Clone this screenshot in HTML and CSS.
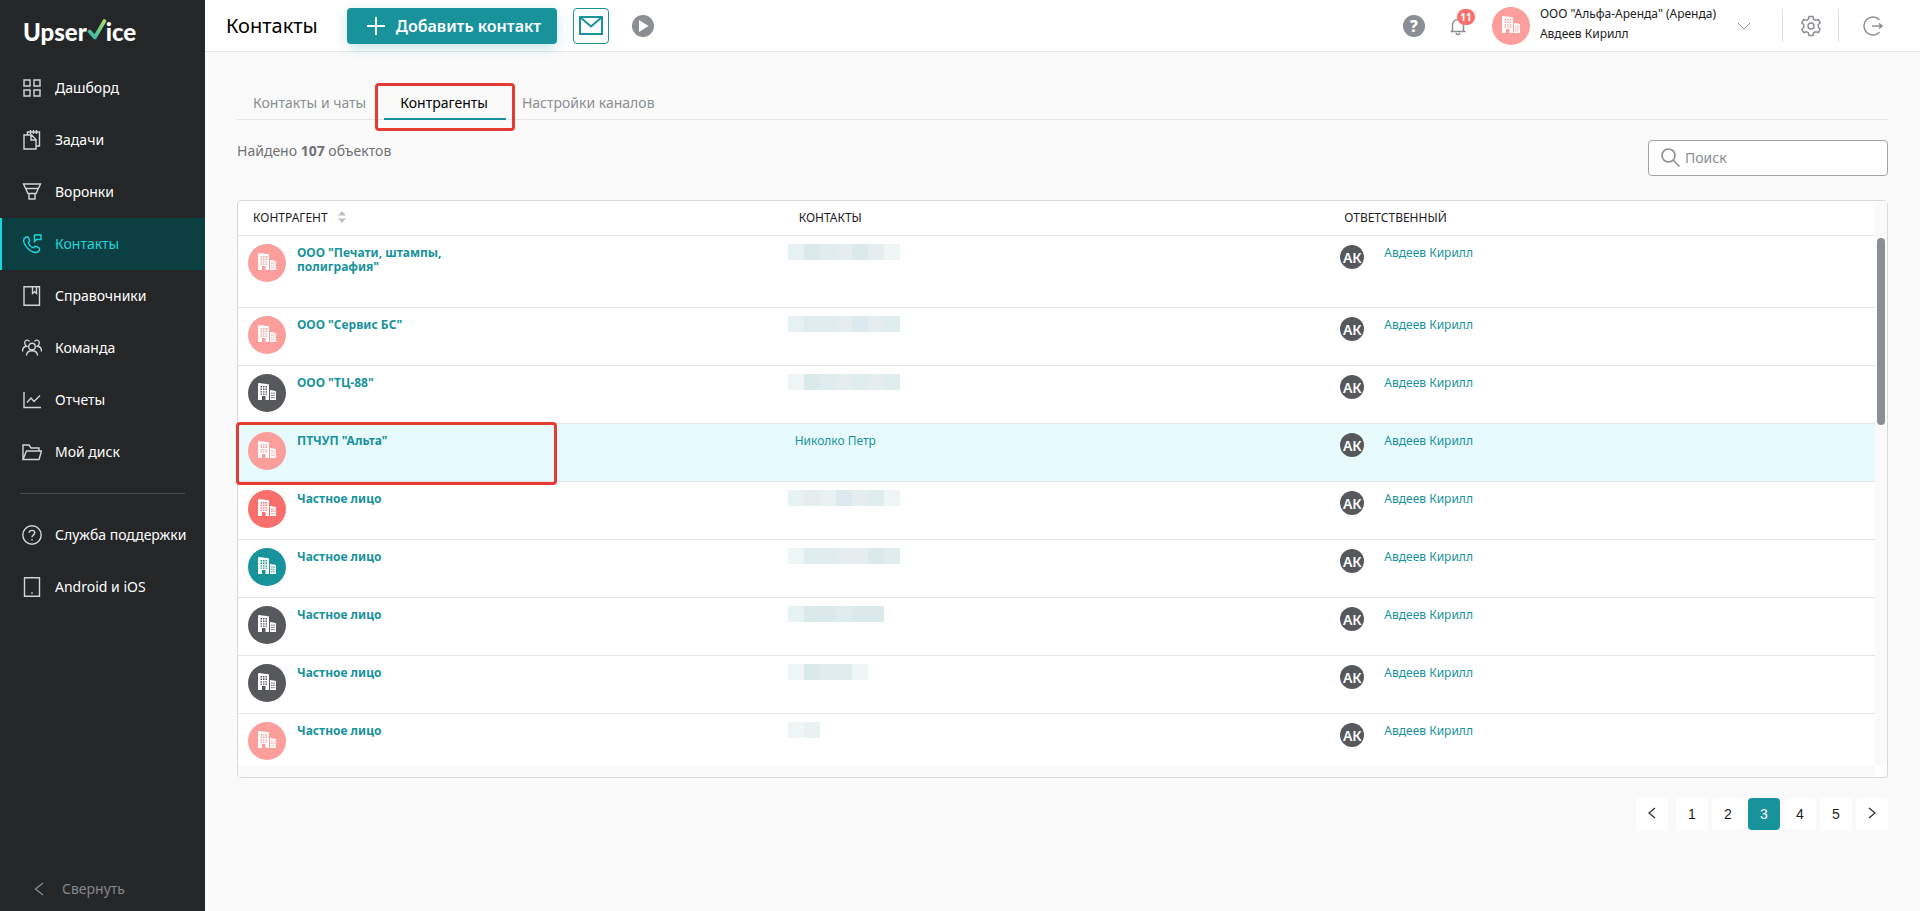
FILE: index.html
```
<!DOCTYPE html>
<html lang="ru">
<head>
  <meta charset="UTF-8">
  <meta name="viewport" content="width=device-width, initial-scale=1.0">
  <title>Upservice - Контрагенты</title>
  <link rel="stylesheet" href="styles.css">
</head>
<body>
  <!-- Иконки -->
  <svg class="sprite" xmlns="http://www.w3.org/2000/svg">
    <symbol id="building" viewBox="0 0 18 18">
      <path fill="currentColor" fill-rule="evenodd" d="M0 .5L1 0l9.500 1.200.5.600V17H7.500v-4H4v4H0zM12 7l5 .8 1 .8V17h-6zM2.500 3v1.400h1.500V3zM5 3v1.400h1.500V3zM7.500 3v1.400H9V3zM2.500 5.600V7H4V5.600zM5 5.600V7h1.500V5.600zM7.500 5.600V7H9V5.600zM2.500 8.200v1.400H4V8.200zM5 8.200v1.400h1.500V8.200zM7.500 8.200v1.400H9V8.200zM2.500 10.600v1.200H4v-1.200zM5 10.600v1.200h1.500v-1.200zM7.500 10.600v1.200H9v-1.200zM13.300 9.500v1.200h1.200V9.500zM15.400 9.500v1.200h1.200V9.500zM13.300 11.800V13h1.200v-1.200zM15.400 11.800V13h1.200v-1.200zM13.300 14v1.200h1.200V14zM15.400 14v1.200h1.200V14z"/>
    </symbol>
  </svg>

  <div class="layout">
    <aside class="sidebar">
      <a href="#" class="logo">Upser<svg width="20" height="21" viewBox="0 0 18 20"><defs><linearGradient id="check" x1="0" y1="1" x2="1" y2="0"><stop offset="0" stop-color="#2fb5b0"/><stop offset="1" stop-color="#a5dd62"/></linearGradient></defs><path d="M2 12l5 5.500L16 2" fill="none" stroke="url(#check)" stroke-width="3.600" stroke-linecap="round" stroke-linejoin="round"/></svg>ice</a>

      <nav class="menu">
        <a href="#"><svg viewBox="0 0 20 20"><path d="M2 2h6v6H2zM12 2h6v6h-6zM2 12h6v6H2zM12 12h6v6h-6z"/></svg>Дашборд</a>
        <a href="#"><svg viewBox="0 0 20 20"><path d="M2 5h7.500l4.500 4.500V19H2zM9 5v5h5M5.500 4.500V2H17.500v14H14M8.500 0v4M11.500 0v4M14.500 0v4"/></svg>Задачи</a>
        <a href="#"><svg viewBox="0 0 20 20"><path d="M1.500 2h17L14 11.500H6zM4 6.500h12M7 11.500V17h6v-5.500"/></svg>Воронки</a>
        <a href="#" class="active"><svg viewBox="0 0 20 20"><path d="M4.500 3C2 4 1 6 2.200 9c1.600 4 5 7.600 9 9 3 1 5.300.2 6.300-2.300.3-.8 0-1.400-.6-1.800l-2.600-1.500c-.8-.4-1.400-.2-1.900.4l-.8 1c-2.300-.6-4.700-3-5.400-5.400l1-.9c.6-.5.7-1.200.3-1.900L6.200 3.300C5.800 2.800 5.200 2.700 4.500 3zM12.500 1h6.500v4.500h-4.500L12.500 7.500z"/></svg>Контакты</a>
        <a href="#"><svg viewBox="0 0 20 20"><path d="M2 .8h15.500v18.400H2zM10.500 1v6.500l2-1.800 2 1.800V1"/></svg>Справочники</a>
        <a href="#"><svg viewBox="0 0 20 20"><circle cx="10" cy="8.500" r="3.300"/><path d="M4.500 17.500c.2-3 2-4.800 5.500-4.800s5.300 1.800 5.500 4.800M7.500 3.500C6.500 1.500 3 1.500 2.700 4.500c-.1 2 .8 3.200 2 3.800C2 8.500.5 10.500.5 13.500M12.500 3.500c1-2 4.500-2 4.800 1 .1 2-.8 3.200-2 3.800 2.700.2 4.200 2.200 4.200 5.200"/></svg>Команда</a>
        <a href="#"><svg viewBox="0 0 20 20"><path d="M2 2v15.500h17M5 12.500l4-4.500 3 3.500L18 5.500"/></svg>Отчеты</a>
        <a href="#"><svg viewBox="0 0 20 20"><path d="M1 17.500V3h6l2 3h8v3M1 17.500L4.500 9h15L17 17.500z"/></svg>Мой диск</a>
      </nav>
      <hr>
      <nav class="menu">
        <a href="#"><svg viewBox="0 0 20 20"><circle cx="10" cy="10" r="9.200"/><path d="M7.200 7.800C7.300 4.500 12.800 4.600 12.800 7.800c0 2-2.800 2.200-2.800 4.400M10 14v1.500"/></svg>Служба поддержки</a>
        <a href="#"><svg viewBox="0 0 20 20"><path d="M2.500 .8h15v18.400h-15zM9.300 16h1.400"/></svg>Android и iOS</a>
      </nav>
      <button type="button" class="collapse"><svg width="10" height="14" viewBox="0 0 10 14"><path d="M9 1L1.500 7 9 13"/></svg>Свернуть</button>
    </aside>

    <div class="page">
      <header class="topbar">
        <h1>Контакты</h1>
        <button type="button" class="btn-add"><svg width="20" height="20" viewBox="0 0 20 20"><path d="M10 1v18M1 10h18"/></svg>Добавить контакт</button>
        <button type="button" class="btn-mail" aria-label="Почта"><svg width="24" height="20" viewBox="0 0 24 20"><path d="M1 1h22v17H1zM1 1l11 9.500L23 1"/></svg></button>
        <button type="button" class="icon-btn" aria-label="Видео"><svg width="22" height="22" viewBox="0 0 22 22"><circle cx="11" cy="11" r="11" fill="#8b8e93"/><path d="M7 5l9.500 6L7 17z" fill="#fff"/></svg></button>

        <div class="tools">
          <button type="button" class="icon-btn help" aria-label="Помощь">?</button>
          <button type="button" class="icon-btn bell" aria-label="Уведомления"><svg width="18" height="20" viewBox="0 0 18 20"><path d="M1.500 15.500h15M3.500 15.500V9c0-7.500 11-7.500 11 0v6.500M7 17c.5 2 3.500 2 4 0" fill="none" stroke="#8b8e93" stroke-width="1.500"/></svg><span class="badge">11</span></button>
          <button type="button" class="account">
            <span class="avatar pink"><svg><use href="#building"/></svg></span>
            <span class="account-text"><span>ООО "Альфа-Аренда" (Аренда)</span><span>Авдеев Кирилл</span></span>
            <svg width="14" height="8" viewBox="0 0 14 8"><path d="M1 1l6 6 6-6"/></svg>
          </button>
          <button type="button" class="icon-btn cell" aria-label="Настройки"><svg width="20" height="22" viewBox="0 0 20 22"><path d="M8 1.500h4l.6 2.700 2 1.100L17.300 4.500l1.900 3.300-2 2v2.400l2 2-1.900 3.300-2.700-.8-2 1.100-.6 2.700H8l-.6-2.700-2-1.100-2.700.8L.8 14.200l2-2V9.800l-2-2 1.900-3.300 2.700.8 2-1.100z"/><circle cx="10" cy="11" r="3"/></svg></button>
          <button type="button" class="icon-btn cell" aria-label="Выйти"><svg width="20" height="20" viewBox="0 0 20 20"><path d="M16.500 3.800A9 9 0 1 0 16.500 16.200M9 10h10M16 7.500l3 2.500-3 2.500"/></svg></button>
        </div>
      </header>

      <main>
        <nav class="tabs">
          <a href="#">Контакты и чаты</a>
          <a href="#" class="active">Контрагенты<span class="mark"></span></a>
          <a href="#">Настройки каналов</a>
        </nav>

        <div class="toolbar">
          <p>Найдено <b>107</b> объектов</p>
          <label class="search">
            <svg width="20" height="20" viewBox="0 0 20 20"><circle cx="7.500" cy="7.500" r="6.500"/><path d="M12.300 12.300L18.500 18.500"/></svg>
            <input type="text" placeholder="Поиск" aria-label="Поиск">
          </label>
        </div>

        <div class="table-box">
          <table>
            <thead>
              <tr>
                <th>КОНТРАГЕНТ<svg class="sort" width="8" height="12" viewBox="0 0 8 12"><path d="M4 0l4 4.500H0zM4 12L0 7.500h8z"/></svg></th>
                <th>КОНТАКТЫ</th>
                <th>ОТВЕТСТВЕННЫЙ</th>
              </tr>
            </thead>
            <tbody>
              <tr>
                <td><div class="company"><span class="avatar pink"><svg><use href="#building"/></svg></span><a href="#">ООО "Печати, штампы, полиграфия"</a></div></td>
                <td><div class="tiles"><i class="c2"></i><i class="c4"></i><i class="c3"></i><i class="c5"></i><i class="c4"></i><i class="c5"></i><i class="c1"></i></div></td>
                <td><div class="person"><span>АК</span><a href="#">Авдеев Кирилл</a></div></td>
              </tr>
              <tr>
                <td><div class="company"><span class="avatar pink"><svg><use href="#building"/></svg></span><a href="#">ООО "Сервис БС"</a></div></td>
                <td><div class="tiles"><i class="c2"></i><i class="c3"></i><i class="c3"></i><i class="c5"></i><i class="c6"></i><i class="c5"></i><i class="c3"></i></div></td>
                <td><div class="person"><span>АК</span><a href="#">Авдеев Кирилл</a></div></td>
              </tr>
              <tr>
                <td><div class="company"><span class="avatar dark"><svg><use href="#building"/></svg></span><a href="#">ООО "ТЦ-88"</a></div></td>
                <td><div class="tiles"><i class="c1"></i><i class="c4"></i><i class="c3"></i><i class="c5"></i><i class="c3"></i><i class="c5"></i><i class="c3"></i></div></td>
                <td><div class="person"><span>АК</span><a href="#">Авдеев Кирилл</a></div></td>
              </tr>
              <tr class="selected">
                <td><div class="company"><span class="avatar pink"><svg><use href="#building"/></svg></span><a href="#">ПТЧУП "Альта"</a></div><span class="mark"></span></td>
                <td><a href="#" class="contact">Николко Петр</a></td>
                <td><div class="person"><span>АК</span><a href="#">Авдеев Кирилл</a></div></td>
              </tr>
              <tr>
                <td><div class="company"><span class="avatar red"><svg><use href="#building"/></svg></span><a href="#">Частное лицо</a></div></td>
                <td><div class="tiles"><i class="c2"></i><i class="c5"></i><i class="c2"></i><i class="c6"></i><i class="c5"></i><i class="c3"></i><i class="c1"></i></div></td>
                <td><div class="person"><span>АК</span><a href="#">Авдеев Кирилл</a></div></td>
              </tr>
              <tr>
                <td><div class="company"><span class="avatar teal"><svg><use href="#building"/></svg></span><a href="#">Частное лицо</a></div></td>
                <td><div class="tiles"><i class="c1"></i><i class="c3"></i><i class="c3"></i><i class="c5"></i><i class="c5"></i><i class="c4"></i><i class="c3"></i></div></td>
                <td><div class="person"><span>АК</span><a href="#">Авдеев Кирилл</a></div></td>
              </tr>
              <tr>
                <td><div class="company"><span class="avatar dark"><svg><use href="#building"/></svg></span><a href="#">Частное лицо</a></div></td>
                <td><div class="tiles"><i class="c2"></i><i class="c4"></i><i class="c4"></i><i class="c3"></i><i class="c4"></i><i class="c4"></i></div></td>
                <td><div class="person"><span>АК</span><a href="#">Авдеев Кирилл</a></div></td>
              </tr>
              <tr>
                <td><div class="company"><span class="avatar dark"><svg><use href="#building"/></svg></span><a href="#">Частное лицо</a></div></td>
                <td><div class="tiles"><i class="c1"></i><i class="c4"></i><i class="c3"></i><i class="c3"></i><i class="c1"></i></div></td>
                <td><div class="person"><span>АК</span><a href="#">Авдеев Кирилл</a></div></td>
              </tr>
              <tr>
                <td><div class="company"><span class="avatar pink"><svg><use href="#building"/></svg></span><a href="#">Частное лицо</a></div></td>
                <td><div class="tiles"><i class="c1"></i><i class="c2"></i></div></td>
                <td><div class="person"><span>АК</span><a href="#">Авдеев Кирилл</a></div></td>
              </tr>
            </tbody>
          </table>
          <div class="scroll"><div class="thumb"></div></div>
          <div class="scroll-x"></div>
        </div>

        <nav class="pages">
          <button type="button" class="prev" aria-label="Назад"><svg width="8" height="12" viewBox="0 0 8 12"><path d="M7 1L1 6l6 5"/></svg></button>
          <button type="button">1</button>
          <button type="button">2</button>
          <button type="button" class="active">3</button>
          <button type="button">4</button>
          <button type="button">5</button>
          <button type="button" aria-label="Вперед"><svg width="8" height="12" viewBox="0 0 8 12"><path d="M1 1l6 5-6 5"/></svg></button>
        </nav>
      </main>
    </div>
  </div>
</body>
</html>
```
FILE: styles.css
```
* {
  box-sizing: border-box;
}
body {
  margin: 0;
  font-family: "Noto Sans", "Open Sans", sans-serif;
  font-size: 14px;
  line-height: 20px;
  color: #1d1d1d;
  background: #fafafa;
}
a {
  color: inherit;
  text-decoration: none;
}
button {
  font: inherit;
  color: inherit;
  background: none;
  border: none;
  padding: 0;
  cursor: pointer;
}
.sprite {
  display: none;
}
.layout {
  display: flex;
  min-height: 100vh;
}

/* Sidebar */
.sidebar {
  display: flex;
  flex-direction: column;
  flex: 0 0 205px;
  background: #242628;
  color: #fff;
}
.logo {
  display: flex;
  align-items: center;
  height: 62px;
  padding-left: 23px;
  font: 900 24px "Lato", sans-serif;
}
.logo svg {
  margin: 0 -1px 4px 0;
}
.menu a {
  display: flex;
  align-items: center;
  gap: 13px;
  height: 52px;
  padding-left: 22px;
  white-space: nowrap;
}
.menu svg {
  width: 20px;
  height: 20px;
  fill: none;
  stroke: #d3d4d5;
  stroke-width: 1.4;
}
.menu a.active {
  color: #1fd5dc;
  background: #0b3f42;
  box-shadow: inset 2px 0 #1fd5dc;
}
.menu a.active svg {
  stroke: #1fd5dc;
}
.sidebar hr {
  width: 165px;
  margin: 15px 20px;
  border: none;
  border-top: 1px solid #4a4c4e;
}
.collapse {
  display: flex;
  align-items: center;
  gap: 18px;
  height: 44px;
  margin-top: auto;
  padding-left: 34px;
  color: #85878a;
}
.collapse svg {
  fill: none;
  stroke: #85878a;
  stroke-width: 1.4;
}

/* Header */
.page {
  flex: 1;
  min-width: 0;
}
.topbar {
  display: flex;
  align-items: center;
  height: 52px;
  padding-left: 21px;
  background: #fff;
  border-bottom: 1px solid #e6e6e6;
}
h1 {
  margin: 0 29px 0 0;
  font-size: 20px;
  font-weight: 400;
  color: #000;
}
.btn-add {
  display: flex;
  align-items: center;
  gap: 10px;
  height: 36px;
  padding: 0 16px 0 19px;
  font-size: 16px;
  font-weight: 600;
  color: #fff;
  background: #18939b;
  border-radius: 4px;
  box-shadow: 0 4px 12px rgba(24, 147, 155, 0.25);
}
.btn-add svg {
  stroke: #fff;
  stroke-width: 2;
}
.btn-mail {
  width: 36px;
  height: 36px;
  margin: 0 23px 0 16px;
  border: 1px solid #18939b;
  border-radius: 4px;
}
.btn-mail svg {
  fill: none;
  stroke: #18939b;
  stroke-width: 2;
}
.icon-btn svg,
.btn-mail svg {
  display: block;
  margin: 0 auto;
}
.tools {
  display: flex;
  align-items: center;
  margin-left: auto;
}
.help {
  width: 22px;
  height: 22px;
  margin-right: 24px;
  font-size: 16px;
  font-weight: 800;
  color: #fff;
  background: #8b8e93;
  border-radius: 50%;
}
.bell {
  position: relative;
  margin-right: 25px;
}
.badge {
  position: absolute;
  top: -7px;
  left: 8px;
  width: 18px;
  height: 16px;
  border-radius: 8px;
  font-size: 10px;
  font-weight: 700;
  line-height: 16px;
  color: #fff;
  background: #f96f6c;
}
.account {
  display: flex;
  align-items: center;
  margin-right: 31px;
  font-size: 12px;
  text-align: left;
}
.account > svg {
  fill: none;
  stroke: #8b8e93;
}
.account-text {
  display: flex;
  flex-direction: column;
  margin: 0 21px 4px 10px;
  white-space: nowrap;
}
.cell {
  width: 56px;
  height: 33px;
  border-left: 1px solid #e0e0e0;
}
.cell:last-child {
  width: 82px;
  padding-right: 14px;
}
.cell svg {
  fill: none;
  stroke: #8b8e93;
  stroke-width: 1.5;
}
.avatar {
  display: flex;
  justify-content: center;
  flex: 0 0 38px;
  height: 38px;
  padding-top: 9px;
  border-radius: 50%;
  color: #fff;
}
.avatar svg {
  width: 18px;
  height: 18px;
}
.pink { background: #fc9e9b; }
.red { background: #f96f6c; }
.teal { background: #18939b; }
.dark { background: #57585c; }

/* Content */
main {
  padding: 32px 32px 0;
}
.tabs {
  display: flex;
  height: 36px;
  border-bottom: 1px solid #e6e6e6;
}
.tabs a {
  position: relative;
  height: 36px;
  padding: 9px 18px 0 16px;
  color: #8b8e93;
}
.tabs a.active {
  color: #000;
  border-bottom: 2px solid #18939b;
}
.mark {
  position: absolute;
  border: 3px solid #e63b32;
  border-radius: 4px;
  pointer-events: none;
}
.tabs .mark {
  inset: -1px -9px -13px;
}
.toolbar {
  display: flex;
  justify-content: space-between;
  height: 80px;
}
.toolbar p {
  margin: 21px 0 0;
  color: #6f7175;
}
.search {
  display: flex;
  align-items: center;
  gap: 4px;
  width: 240px;
  height: 36px;
  margin-top: 20px;
  padding: 0 12px;
  background: #fff;
  border: 1px solid #a0a2a5;
  border-radius: 4px;
}
.search svg {
  flex: none;
  fill: none;
  stroke: #8b8e93;
  stroke-width: 1.6;
}
.search input {
  width: 100%;
  padding: 0;
  font: inherit;
  border: none;
  outline: none;
}
.search input::placeholder {
  color: #8b8e93;
}

/* Table */
.table-box {
  display: grid;
  grid-template-columns: 1fr 12px;
  grid-template-rows: auto 12px;
  background: #fff;
  border: 1px solid #d9d9d9;
  border-radius: 4px;
}
table {
  width: 100%;
  table-layout: fixed;
  border-collapse: separate;
  border-spacing: 0;
  font-size: 12px;
}
th {
  height: 35px;
  padding: 0 15px;
  font-weight: 400;
  text-align: left;
  border-bottom: 1px solid #e6e6e6;
}
.sort {
  margin-left: 10px;
  vertical-align: -1px;
  fill: #bfbfbf;
}
td {
  position: relative;
  padding: 0;
  vertical-align: top;
  line-height: 14px;
  color: #18939b;
  border-bottom: 1px solid #e6e6e6;
}
tr:last-child td {
  border-bottom: none;
}
.selected td {
  background: #e7fafd;
}
td .mark {
  top: -2px;
  bottom: -4px;
  left: -2px;
  width: 321px;
}
.company {
  display: flex;
  align-items: flex-start;
  gap: 11px;
  padding-left: 10px;
}
.company .avatar {
  margin-top: 8px;
}
.company a {
  width: 180px;
  padding: 10px 0 33px;
  font-weight: 700;
}
tr:last-child .company a {
  padding-bottom: 27px;
}
.contact {
  display: block;
  padding: 10px 11px;
}
.tiles {
  display: flex;
  padding: 8px 4px;
}
.tiles i {
  width: 16px;
  height: 16px;
}
.c1 { background: #f0f6f6; }
.c2 { background: #e8f2f2; }
.c3 { background: #e0edee; }
.c4 { background: #daeaea; }
.c5 { background: #e5edef; }
.c6 { background: #dceaef; }
.person {
  display: flex;
  gap: 20px;
  padding-left: 11px;
}
.person span {
  width: 24px;
  height: 24px;
  margin-top: 9px;
  border-radius: 50%;
  font-size: 14px;
  font-weight: 600;
  line-height: 26px;
  text-align: center;
  color: #fff;
  background: #57585c;
}
.person a {
  padding-top: 10px;
}
.scroll {
  padding: 37px 2px 0;
  background: #fafafa;
}
.thumb {
  height: 187px;
  border-radius: 4px;
  background: #8b8e93;
}
.scroll-x {
  background: #fafafa;
}

/* Pagination */
.pages {
  display: flex;
  justify-content: flex-end;
  gap: 4px;
  margin-top: 20px;
}
.pages button {
  width: 32px;
  height: 32px;
  font-family: "Liberation Sans", Arial, sans-serif;
  background: #fff;
  border-radius: 4px;
}
.pages .prev {
  margin-right: 4px;
}
.pages .active {
  color: #fff;
  background: #18939b;
}
.pages svg {
  fill: none;
  stroke: #333;
  stroke-width: 1.3;
}
```
